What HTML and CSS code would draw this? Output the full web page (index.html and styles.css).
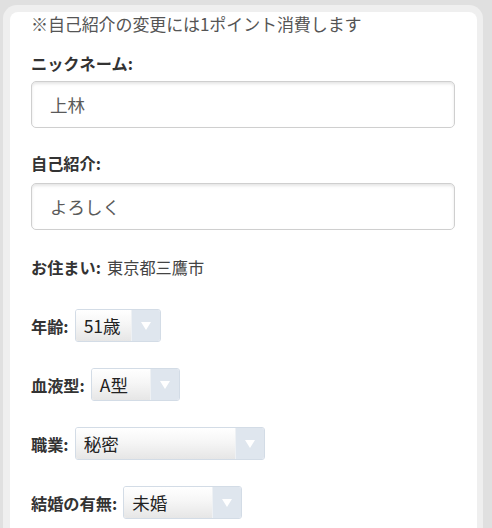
FILE: index.html
```html
<!DOCTYPE html>
<html lang="ja">
<head>
<meta charset="utf-8">
<title>プロフィール編集</title>
<link rel="stylesheet" href="styles.css">
</head>
<body>
<div class="card">
  <div class="panel">
    <p class="note">※自己紹介の変更には1ポイント消費します</p>

    <div class="field">
      <div class="label">ニックネーム:</div>
      <div class="input">上林</div>
    </div>

    <div class="field gap-intro">
      <div class="label">自己紹介:</div>
      <div class="input">よろしく</div>
    </div>

    <div class="row gap-addr">
      <span class="label">お住まい:</span>
      <span class="value">東京都三鷹市</span>
    </div>

    <div class="row sel-row gap-age">
      <span class="label">年齢:</span>
      <span class="select w-age"><span class="sel-val">51歳</span><span class="sel-arrow"></span></span>
    </div>

    <div class="row sel-row">
      <span class="label">血液型:</span>
      <span class="select w-blood"><span class="sel-val">A型</span><span class="sel-arrow"></span></span>
    </div>

    <div class="row sel-row">
      <span class="label">職業:</span>
      <span class="select w-job"><span class="sel-val">秘密</span><span class="sel-arrow"></span></span>
    </div>

    <div class="row sel-row">
      <span class="label">結婚の有無:</span>
      <span class="select w-marry"><span class="sel-val">未婚</span><span class="sel-arrow"></span></span>
    </div>
  </div>
</div>
</body>
</html>
```

FILE: styles.css
```css
html, body {
  margin: 0;
  padding: 0;
}
body {
  background: #e0e0e0;
  font-family: "Noto Sans CJK JP", "Noto Sans", sans-serif;
  height: 528px;
  overflow: hidden;
}
.card {
  margin: 5px 9px 0 3px;
  padding: 7px 6px 0 7px;
  background: #efefef;
  border-radius: 14px 14px 0 0;
  height: 516px;
}
.panel {
  background: #fff;
  border-radius: 8px 8px 0 0;
  height: 100%;
  overflow: hidden;
  padding: 0 22px 0 21px;
  display: flex;
  flex-direction: column;
}
.note {
  margin: 0;
  font-size: 17px;
  line-height: 24px;
  color: #555;
  letter-spacing: -0.1px;
}
.field {
  margin-top: 15px;
  display: flex;
  flex-direction: column;
  gap: 6px;
}
.gap-intro {
  margin-top: 23px;
  gap: 8px;
}
.label {
  font-size: 16.2px;
  line-height: 24px;
  font-weight: bold;
  color: #333;
}
.input {
  flex: none;
  height: 45px;
  border: 1px solid #cfcfcf;
  border-radius: 5px;
  box-shadow: inset 0 2px 3px rgba(0, 0, 0, 0.10);
  padding-left: 18px;
  font-size: 17.5px;
  line-height: 45px;
  color: #5a5a5a;
}
.row {
  display: flex;
  align-items: center;
  gap: 6px;
  flex: none;
}
.value {
  font-size: 16.2px;
  line-height: 24px;
  color: #444;
}
.gap-addr {
  margin-top: 25px;
}
.gap-age {
  margin-top: 30px !important;
}
.sel-row {
  margin-top: 26px;
  height: 33px;
}
.select {
  display: flex;
  height: 31px;
  border: 1px solid #d3dce6;
  border-radius: 3px;
  overflow: hidden;
}
.sel-val {
  flex: 1;
  padding-left: 8px;
  font-size: 17.5px;
  line-height: 31px;
  color: #222;
  background: linear-gradient(#ffffff 0%, #f6f6f6 45%, #e6e6e6 100%);
  border-right: 1px solid #eef1f4;
}
.sel-arrow {
  width: 28px;
  background: #dfe6ee;
  position: relative;
}
.sel-arrow::after {
  content: "";
  position: absolute;
  left: 9px;
  top: 12px;
  border-left: 5px solid transparent;
  border-right: 5px solid transparent;
  border-top: 8px solid #ffffff;
}
.w-age { width: 84px; }
.w-blood { width: 87px; }
.w-job { width: 188px; }
.w-marry { width: 117px; }
```
